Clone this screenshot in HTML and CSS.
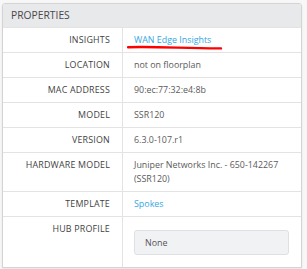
FILE: index.html
```html
<!DOCTYPE html>
<html>
<head>
<meta charset="utf-8">
<link rel="stylesheet" href="styles.css">
</head>
<body>
<div class="card">
  <div class="card-header">PROPERTIES</div>
  <div class="rows">
    <div class="row">
      <div class="label">INSIGHTS</div>
      <div class="value annotated">
        <a class="link" href="#">WAN Edge Insights</a>
        <svg class="scribble" width="96" height="6" viewBox="0 0 96 6"><path d="M1 2.2 C 30 1.2, 60 3.6, 94 3.4" stroke="#ff0000" stroke-width="2.4" fill="none" stroke-linecap="round"/></svg>
      </div>
    </div>
    <div class="row">
      <div class="label">LOCATION</div>
      <div class="value">not on floorplan</div>
    </div>
    <div class="row">
      <div class="label">MAC ADDRESS</div>
      <div class="value">90:ec:77:32:e4:8b</div>
    </div>
    <div class="row">
      <div class="label">MODEL</div>
      <div class="value">SSR120</div>
    </div>
    <div class="row">
      <div class="label">VERSION</div>
      <div class="value">6.3.0-107.r1</div>
    </div>
    <div class="row">
      <div class="label">HARDWARE MODEL</div>
      <div class="value">Juniper Networks Inc. - 650-142267 (SSR120)</div>
    </div>
    <div class="row">
      <div class="label">TEMPLATE</div>
      <div class="value"><a class="link" href="#">Spokes</a></div>
    </div>
    <div class="row last">
      <div class="label">HUB PROFILE</div>
      <div class="value">
        <div class="select">None</div>
      </div>
    </div>
  </div>
</div>
</body>
</html>
```
FILE: styles.css
```css
html, body {
  margin: 0;
  padding: 0;
}
body {
  background: #f7f7f7;
  font-family: "Open Sans", "Liberation Sans", sans-serif;
  width: 307px;
  height: 269px;
  overflow: hidden;
}
.card {
  margin: 3px 0 0 2px;
  width: 300px;
  box-sizing: border-box;
  background: #ffffff;
  border: 1px solid #d4d4d4;
  border-radius: 3px 3px 0 0;
  box-shadow: 0 1px 2px rgba(0,0,0,0.08);
}
.card-header {
  background: #e8e9eb;
  height: 23px;
  line-height: 23px;
  padding-left: 8px;
  font-size: 10.3px;
  color: #484848;
  border-radius: 2px 2px 0 0;
}
.row {
  display: grid;
  grid-template-columns: 120px 1fr;
  border-top: 1px solid #e3e3e3;
}
.label {
  box-sizing: border-box;
  border-right: 1px solid #e3e3e3;
  padding: 5px 12px 5px 4px;
  text-align: right;
  font-size: 8.9px;
  letter-spacing: 0.2px;
  line-height: 14px;
  color: #3f3f3f;
}
.value {
  padding: 5px 12px 5px 11px;
  font-size: 8.9px;
  line-height: 14px;
  color: #5a5a5a;
}
.annotated {
  position: relative;
}
.scribble {
  position: absolute;
  left: 4px;
  top: 17px;
}
.link {
  color: #35a7e4;
  text-decoration: none;
}
.last .value {
  padding-bottom: 12px;
}
.select {
  margin-top: 8px;
  height: 23px;
  line-height: 23px;
  padding-left: 10px;
  background: #f1f2f4;
  border: 1px solid #dfe0e3;
  border-radius: 3px;
  color: #555;
}
```
